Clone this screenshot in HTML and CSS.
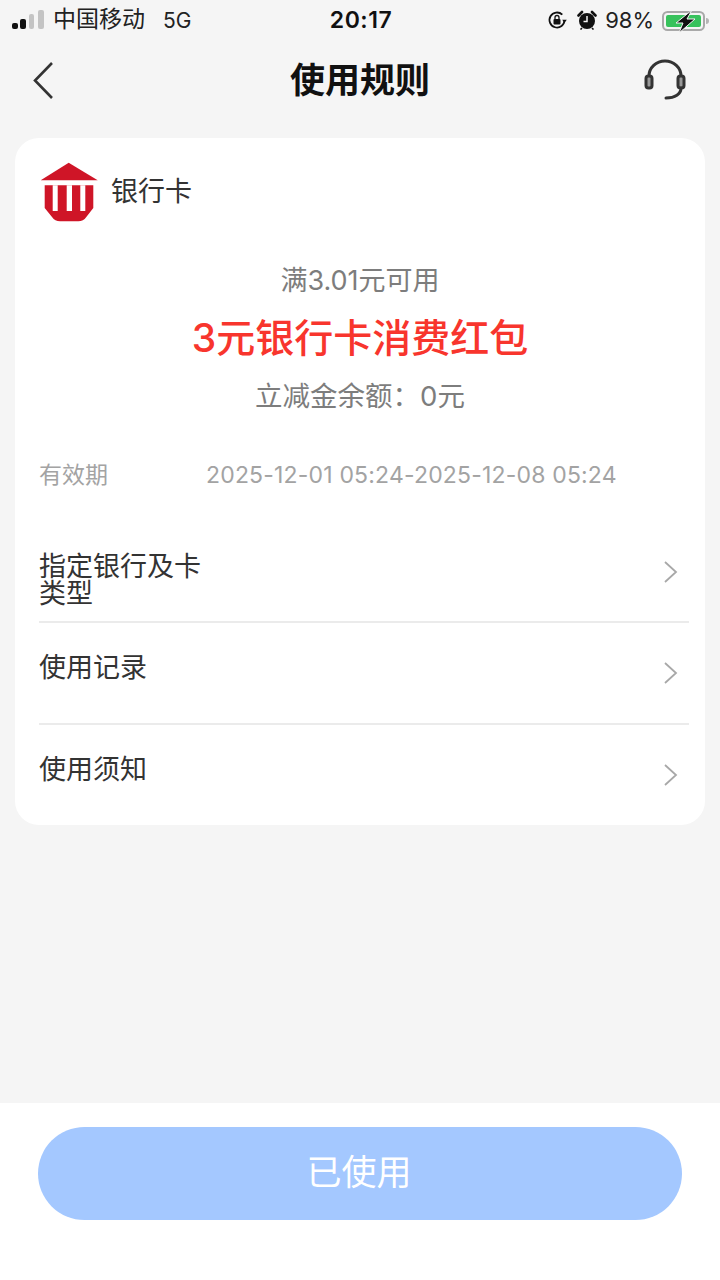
FILE: index.html
```html
<!DOCTYPE html>
<html lang="zh">
<head>
<meta charset="utf-8">
<title>使用规则</title>
<link rel="stylesheet" href="styles.css">
</head>
<body>
<div class="status">
  <div class="st-left">
    <svg class="signal" width="34" height="20" viewBox="0 0 34 20"><rect x="0" y="13" width="6" height="6" rx="2" fill="#111"/><rect x="8" y="9" width="6" height="10" rx="2" fill="#111"/><rect x="17" y="4" width="5" height="15" rx="2" fill="#c4c4c4"/><rect x="26" y="0" width="6" height="19" rx="2" fill="#c4c4c4"/></svg>
    <span class="carrier">中国移动</span><span class="net">5G</span>
  </div>
  <div class="st-time">20:17</div>
  <div class="st-right">
    <svg class="ic-lock" width="20" height="20" viewBox="0 0 20 20"><path d="M17.500 10a7.500 7.500 0 1 1-2.200-5.300" fill="none" stroke="#111" stroke-width="1.800"/><path d="M19.800 9.800h-4.600l2.300 3z" fill="#111"/><rect x="6.500" y="9" width="7" height="5.500" rx="1" fill="#111"/><path d="M8 9V7.500a2 2 0 0 1 4 0V9" fill="none" stroke="#111" stroke-width="1.300"/></svg>
    <svg class="ic-alarm" width="20" height="20" viewBox="0 0 20 20"><circle cx="10" cy="11" r="8" fill="#111"/><path d="M10 6v5.500H6.500" fill="none" stroke="#f5f5f5" stroke-width="1.500"/><path d="M1.500 5.500L5 2M18.500 5.500L15 2" stroke="#111" stroke-width="2.600" stroke-linecap="round"/><path d="M5 18l-1.500 1.500M15 18l1.500 1.500" stroke="#111" stroke-width="1.600"/></svg>
    <span class="pct">98%</span>
    <svg class="ic-batt" width="48" height="26" viewBox="0 0 48 26"><rect x="2" y="3" width="41" height="18" rx="4.500" fill="none" stroke="#a9a9a9" stroke-width="2"/><rect x="5" y="6" width="35" height="12" rx="2" fill="#37c25c"/><path d="M45 9a3 3 0 0 1 0 6z" fill="#b5b5b5"/><path d="M31 1L15 14h7l-4 10 16-14h-8z" fill="#111" stroke="#f5f5f5" stroke-width="1"/></svg>
  </div>
</div>

<header class="nav">
  <svg class="nav-back" width="26" height="40" viewBox="0 0 26 40"><path d="M22 3L5 20.500 22 38" fill="none" stroke="#333" stroke-width="2.600"/></svg>
  <h1 class="nav-title">使用规则</h1>
  <svg class="nav-help" width="46" height="46" viewBox="0 0 46 46"><path d="M7 18a16 15 0 0 1 32 0" fill="none" stroke="#333" stroke-width="3"/><rect x="4" y="18" width="6" height="12" rx="2.500" fill="#999" stroke="#333" stroke-width="3"/><rect x="36" y="18" width="6" height="12" rx="2.500" fill="#999" stroke="#333" stroke-width="3"/><path d="M39 30c0 6-6 10-15 10" fill="none" stroke="#333" stroke-width="3" stroke-linecap="round"/></svg>
</header>

<main class="card">
  <div class="brand">
    <svg width="60" height="60" viewBox="0 0 60 60"><path d="M28.700.7L57.700 18.300H.7z" fill="#cf1527"/><path d="M4.700 23.300h48.600V46l-7 9q-3 4.300-8 4.300H20q-5 0-8-4.300l-7.300-9z" fill="#cf1527"/><path d="M12.700 23.300h5V49h-5zM26.700 23.300H32V49h-5.300zM40.300 23.300h5V49h-5z" fill="#fff"/></svg>
    <span class="brand-name">银行卡</span>
  </div>
  <div class="summary">
    <div class="cond">满3.01元可用</div>
    <div class="amount">3元银行卡消费红包</div>
    <div class="balance">立减金余额：0元</div>
  </div>
  <div class="validity">
    <span class="v-label">有效期</span>
    <span class="v-date">2025-12-01 05:24-2025-12-08 05:24</span>
  </div>
  <div class="row row-first">
    <div class="row-text">指定银行及卡类型</div>
    <svg class="chev" width="16" height="24" viewBox="0 0 16 24"><path d="M2 2l11 10L2 22" fill="none" stroke="#a8a8a8" stroke-width="1.800"/></svg>
  </div>
  <div class="row">
    <div class="row-text">使用记录</div>
    <svg class="chev" width="16" height="24" viewBox="0 0 16 24"><path d="M2 2l11 10L2 22" fill="none" stroke="#a8a8a8" stroke-width="1.800"/></svg>
  </div>
  <div class="row row-last">
    <div class="row-text">使用须知</div>
    <svg class="chev" width="16" height="24" viewBox="0 0 16 24"><path d="M2 2l11 10L2 22" fill="none" stroke="#a8a8a8" stroke-width="1.800"/></svg>
  </div>
</main>

<footer class="foot">
  <div class="btn">已使用</div>
</footer>
</body>
</html>
```

FILE: styles.css
```css
* { box-sizing: border-box; margin: 0; padding: 0; }
html, body { height: 100%; }
body {
  width: 720px; height: 1280px; overflow: hidden;
  background: #f5f5f5;
  font-family: Inter, "Noto Sans CJK SC", sans-serif;
  display: flex; flex-direction: column;
}
.status {
  height: 40px; padding: 0 10px 0 12px;
  display: grid; grid-template-columns: 1fr auto 1fr; align-items: center;
  color: #111;
}
.st-left { display: flex; align-items: center; }
.signal { margin-right: 7px; margin-top: -1px; }
.carrier { font-size: 23px; color: #222; line-height: 40px; margin-top: -2px; }
.net { font-size: 21px; margin-left: 18px; color: #222; }
.st-time { font-size: 23px; font-weight: 600; letter-spacing: .5px; }
.st-right { display: flex; align-items: center; justify-content: flex-end; }
.ic-lock { margin-right: 10px; }
.ic-alarm { margin-right: 8px; }
.pct { font-size: 22px; color: #222; margin-right: 7px; }
.ic-batt { margin-top: 3px; margin-right: 1px; }
.nav {
  height: 80px; padding: 0 32px 0 30px; margin-bottom: 18px;
  display: flex; align-items: center; justify-content: space-between; position: relative;
}
.nav-title {
  position: absolute; left: 0; right: 0; text-align: center;
  font-size: 35px; font-weight: 700; color: #111; line-height: 80px; margin-top: -1px;
}
.nav-help { margin-top: 2px; }
.card {
  width: 690px; height: 687px; margin-left: 15px;
  background: #fff; border-radius: 24px;
  padding: 24px 16px 0 24px;
}
.brand { display: flex; align-items: center; gap: 11px; height: 60px; margin-left: 1px; }
.brand-name { font-size: 27px; color: #333; margin-top: -5px; }
.summary { text-align: center; margin-right: 8px; margin-top: 39px; }
.cond { font-size: 27px; line-height: 40px; color: #7d7d7d; }
.amount { font-size: 39px; font-weight: 500; line-height: 60px; color: #f8352d; margin-top: 7px; }
.balance { font-size: 27.500px; line-height: 40px; color: #7d7d7d; margin-top: 8px; }
.validity { display: flex; align-items: center; height: 40px; margin-top: 38px; }
.v-label { width: 167px; font-size: 23px; color: #a3a3a3; margin-bottom: 2px; }
.v-date { font-size: 23px; letter-spacing: .18px; color: #a3a3a3; white-space: nowrap; margin-top: 2px; }
.row {
  height: 102px; display: flex; justify-content: space-between; align-items: flex-start;
  border-bottom: 2px solid #ebebeb; padding-top: 31px;
}
.row-first { height: 90px; margin-top: 39px; padding-top: 20px; }
.row-last { border-bottom: 0; }
.row-text { width: 170px; font-size: 27px; line-height: 27px; color: #333; }
.chev { margin-right: 10px; margin-top: 7px; }
.foot {
  margin-top: auto; height: 177px; background: #fff; padding: 24px 38px 0;
}
.btn {
  height: 93px; width: 644px; border-radius: 47px; background: #a4c8ff; color: #fff;
  font-size: 35px; text-align: center; line-height: 90px; padding-right: 2px;
}
```
